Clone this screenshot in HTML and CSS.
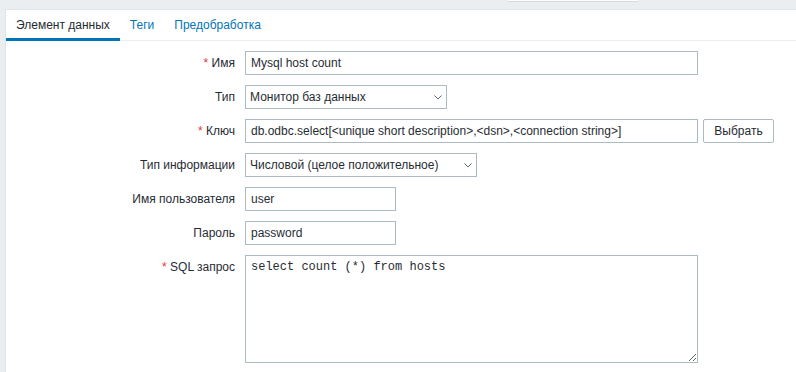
FILE: index.html
```html
<!DOCTYPE html>
<html>
<head>
    <title>Элемент данных</title>
    <link rel="stylesheet" href="styles.css">
</head>
<body>
    <div class="header-strip">
        <div class="header-search"></div>
    </div>

    <div class="page">
        <div class="panel">
            <!-- вкладки -->
            <ul class="tabs">
                <li class="tab active">Элемент данных</li>
                <li class="tab">Теги</li>
                <li class="tab">Предобработка</li>
            </ul>

            <div class="form-list">
                <label class="form-label"><span class="asterisk">*</span> Имя</label>
                <div class="form-field">
                    <input class="text-input wide" type="text" value="Mysql host count">
                </div>

                <label class="form-label">Тип</label>
                <div class="form-field">
                    <div class="select-box type-select">
                        <select class="select-input">
                            <option>Монитор баз данных</option>
                        </select>
                        <svg class="chevron" width="8" height="5" viewBox="0 0 8 5"><path d="M0.5 0.5 L4 4 L7.5 0.5" fill="none" stroke="#5c6b73" stroke-width="1"/></svg>
                    </div>
                </div>

                <label class="form-label"><span class="asterisk">*</span> Ключ</label>
                <div class="form-field">
                    <input class="text-input wide" type="text" value="db.odbc.select[<unique short description>,<dsn>,<connection string>]">
                    <button class="btn-grey">Выбрать</button>
                </div>

                <label class="form-label">Тип информации</label>
                <div class="form-field">
                    <div class="select-box info-select">
                        <select class="select-input">
                            <option>Числовой (целое положительное)</option>
                        </select>
                        <svg class="chevron" width="8" height="5" viewBox="0 0 8 5"><path d="M0.5 0.5 L4 4 L7.5 0.5" fill="none" stroke="#5c6b73" stroke-width="1"/></svg>
                    </div>
                </div>

                <label class="form-label">Имя пользователя</label>
                <div class="form-field">
                    <input class="text-input short" type="text" value="user">
                </div>

                <label class="form-label">Пароль</label>
                <div class="form-field">
                    <input class="text-input short" type="text" value="password">
                </div>

                <label class="form-label top"><span class="asterisk">*</span> SQL запрос</label>
                <div class="form-field">
                    <textarea class="sql-text">select count (*) from hosts</textarea>
                </div>
            </div>
        </div>
    </div>
</body>
</html>
```

FILE: styles.css
```css
body {
    margin: 0;
    background-color: #ebeef0;
    font-family: "Liberation Sans", Arial, sans-serif;
    font-size: 12px;
    color: #1f2c33;
    overflow: hidden;
}

/* верхняя полоса */
.header-strip {
    height: 9px;
    padding-left: 508px;
}
.header-search {
    width: 130px;
    height: 1px;
    background-color: #fff;
    border-bottom: 1px solid #d5dbde;
}

.page {
    padding-left: 5px;
}
.panel {
    background-color: #fff;
    border: 1px solid #dfe4e7;
    border-right: 0;
    border-bottom: 0;
    height: 362px;
}

/* вкладки */
.tabs {
    list-style: none;
    margin: 0;
    padding: 0;
    display: flex;
    height: 30px;
    border-bottom: 1px solid #ebeef0;
}
.tab {
    box-sizing: border-box;
    height: 31px;
    margin-bottom: -1px;
    padding: 2px 10px 0;
    display: flex;
    align-items: center;
    color: #0275b8;
    border-bottom: 3px solid transparent;
}
.tab.active {
    color: #1f2c33;
    border-bottom-color: #0275b8;
}

/* форма */
.form-list {
    display: grid;
    grid-template-columns: 229px 1fr;
    column-gap: 10px;
    row-gap: 10px;
    padding-top: 10px;
}
.form-label {
    text-align: right;
    line-height: 24px;
    height: 24px;
    white-space: nowrap;
}
.asterisk {
    color: #e33734;
}
.form-field {
    display: flex;
    align-items: flex-start;
}

.text-input {
    box-sizing: border-box;
    height: 24px;
    border: 1px solid #acbbc2;
    padding: 0 5px;
    font-family: "Liberation Sans", Arial, sans-serif;
    font-size: 12px;
    color: #1f2c33;
    background: #fff;
    outline: none;
}
.text-input.wide {
    width: 453px;
}
.text-input.short {
    width: 151px;
}

.select-box {
    position: relative;
    height: 24px;
}
.type-select {
    width: 202px;
}
.info-select {
    width: 232px;
}
.select-input {
    -webkit-appearance: none;
    appearance: none;
    box-sizing: border-box;
    width: 100%;
    height: 24px;
    border: 1px solid #acbbc2;
    border-radius: 0;
    padding: 0 20px 0 4px;
    background: #fff;
    font-family: "Liberation Sans", Arial, sans-serif;
    font-size: 12px;
    color: #1f2c33;
    outline: none;
}
.chevron {
    position: absolute;
    right: 5px;
    top: 10px;
}

.btn-grey {
    box-sizing: border-box;
    height: 24px;
    width: 71px;
    margin-left: 5px;
    border: 1px solid #acbbc2;
    border-radius: 2px;
    background: #fff;
    font-family: "Liberation Sans", Arial, sans-serif;
    font-size: 12px;
    color: #1f2c33;
    padding: 0;
}

.sql-text {
    box-sizing: border-box;
    width: 453px;
    height: 108px;
    border: 1px solid #acbbc2;
    padding: 4px 5px;
    margin: 0;
    font-family: "Liberation Mono", "Courier New", monospace;
    font-size: 12px;
    color: #1f2c33;
    outline: none;
}
```
